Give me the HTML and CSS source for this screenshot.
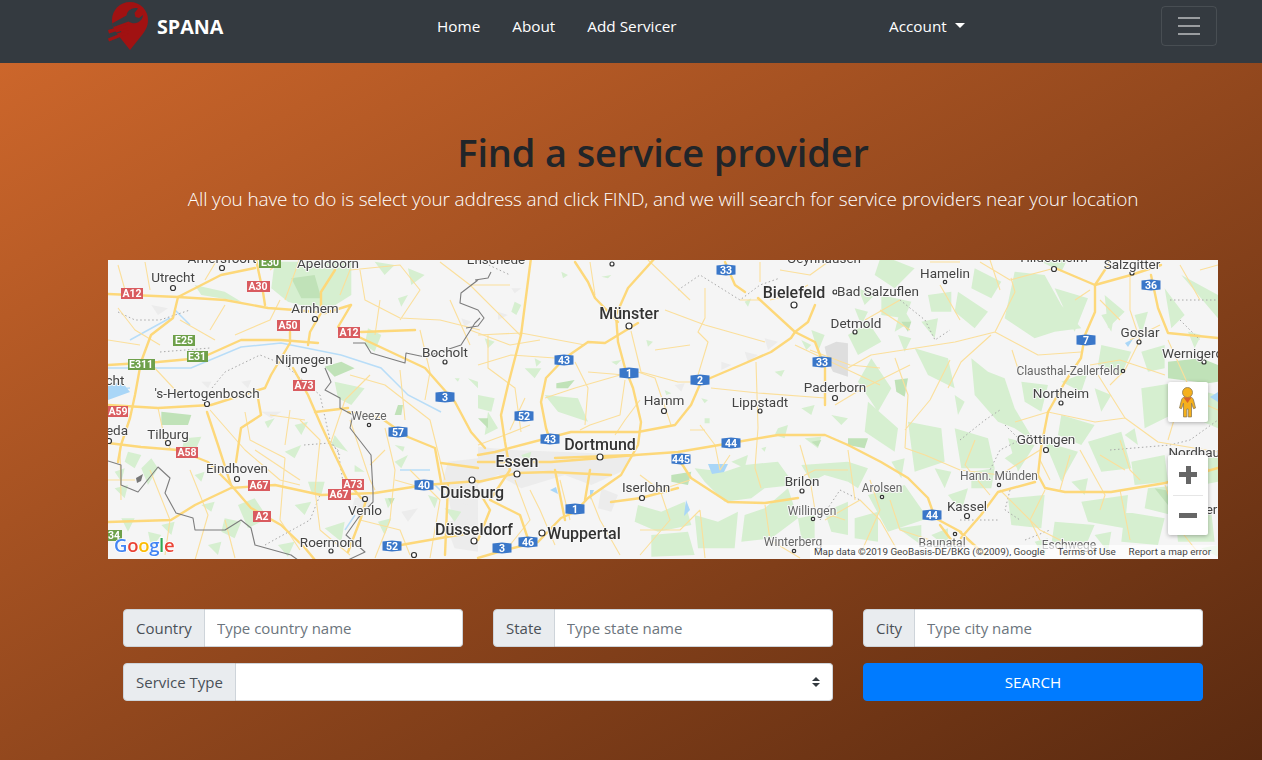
FILE: index.html
```html
<!DOCTYPE html>
<html lang="en">
<head>
<meta charset="utf-8">
<title>SPANA</title>
<link rel="stylesheet" href="styles.css">
</head>
<body>
<nav class="navbar">
  <a class="brand" href="#">
    <svg class="brand-logo" viewBox="0 0 44 52" aria-hidden="true">
      <path class="pin" d="M23 2C13 2 5 10 5 20c0 6 2.500 10.500 6 15l12 15 12-15c3.500-4.500 6-9 6-15C41 10 33 2 23 2Z"/>
      <path class="pin" d="M1 30L20 24.500 21 27.500 2 33.500ZM1 38.500L21 30.500 22 33.500 2 41.500Z"/>
      <path class="wrench" d="M31 8.500C26 7 20.500 10 19.500 15.500L5 23.500 6.500 27 21.500 21.500C26 24.500 31.500 23.500 34.500 19.500C35.500 18 36 16.500 36 15L32 18 28.500 17 27.500 13Z"/>
      <path class="wrench" d="M0 35.500L14 31 14.300 32 0 37Z"/>
    </svg>
    <span>SPANA</span>
  </a>
  <ul class="nav-links">
    <li><a href="#">Home</a></li>
    <li><a href="#">About</a></li>
    <li><a href="#">Add Servicer</a></li>
  </ul>
  <a class="account" href="#">Account<i class="caret"></i></a>
  <button class="toggler" type="button" aria-label="Menu">
    <svg viewBox="0 0 30 30" aria-hidden="true"><path d="M4 7h22M4 15h22M4 23h22"/></svg>
  </button>
</nav>

<main class="page">
  <header class="hero">
    <h1>Find a service provider</h1>
    <p>All you have to do is select your address and click FIND, and we will search for service providers near your location</p>
  </header>

  <section class="map">
    <svg class="map-canvas" viewBox="108 260 1110 299" aria-label="Map">
      <rect x="108" y="260" width="1110" height="299" class="land"/>

      <!-- urban and grey areas -->
      <g transform="translate(478 255) scale(.3333)">
        <path class="urban" d="M0 575L100 585 240 590 470 600 430 650 340 690 260 660 130 700 60 660 0 690ZM370 700L420 720 400 770 360 760ZM-90 720L0 730 0 860-60 880Z"/>
        <path class="grey" d="M1040 275L1075 260 1110 265 1110 365 1065 350 1050 320Z"/>
        <path class="urban" d="M60 170L90 180 60 195ZM100 100L130 100 110 115ZM590 390L620 385 610 410ZM730 320L760 330 730 345ZM800 290L840 300 810 320ZM860 250L900 260 870 285Z"/>
      </g>
      <g transform="translate(108 255) scale(.3333)">
        <path class="urban" d="M130 150L180 160 150 180ZM280 380L310 380 300 400ZM400 380L430 375 420 400ZM1020 620L1110 610 1110 760 1050 740 1000 690ZM1010 800L1110 790 1110 890 1040 880ZM880 770L930 760 900 800ZM460 470L520 470 490 490ZM740 730L790 720 780 770 730 770ZM1060 190L1090 200 1070 215Z"/>
      </g>

      <!-- green areas: west -->
      <g transform="translate(108 255) scale(.3333)">
        <path class="gr" d="M500 20L730 20 730 120 650 170 540 140 490 100ZM260 90L350 110 400 140 280 120ZM800 20L860 30 830 60ZM900 40L950 60 910 90ZM60 590L100 600 80 640 50 620ZM230 550L280 545 260 590 220 590ZM100 640L130 610 150 640 120 690ZM260 660L290 650 280 680ZM680 380L770 400 730 450 690 430ZM390 750L440 730 480 790 420 820ZM560 510L600 500 580 540ZM530 590L580 570 560 610ZM600 680L650 680 640 720 610 710ZM740 630L770 650 740 650ZM830 730L860 730 840 760ZM860 570L890 575 885 590ZM1040 370L1055 370 1050 380ZM280 750L320 740 310 770ZM40 790L80 790 60 830ZM350 790L400 800 380 850 340 830ZM560 750L610 740 590 780ZM860 620L900 600 880 640ZM680 540L720 590 670 570ZM780 220L820 240 800 290 770 270ZM870 130L900 120 880 155ZM20 650L50 640 40 680ZM470 500L500 490 480 520ZM650 820L710 800 700 860ZM510 870L560 860 540 905ZM810 800L850 790 830 840ZM960 720L990 730 980 760ZM300 870L340 860 330 900ZM160 810L200 800 190 840ZM120 830L160 840 130 880ZM1010 760L1060 770 1040 800ZM1080 370L1110 380 1110 400ZM20 700L60 690 50 730Z"/>
        <path class="gd" d="M550 70L620 60 640 130 580 130ZM160 470L250 480 240 510 160 510ZM650 335L700 320 740 340 680 365ZM870 450L885 450 880 480 860 480ZM840 730L860 730 850 750Z"/>
      </g>
      <!-- green areas: centre -->
      <g transform="translate(478 255) scale(.3333)">
        <path class="gr" d="M0 420L50 430 40 470 0 460ZM200 420L300 430 330 500 240 470ZM30 470L60 520 20 540ZM650 640L740 650 800 630 900 620 950 690 860 700 820 730 740 740 680 680ZM480 750L550 770 620 740 640 810 540 830 470 800ZM800 780L860 760 930 700 960 790 880 850 790 860ZM520 840L630 830 650 900 520 905ZM650 780L720 800 780 770 770 880 660 880ZM970 630L1110 620 1110 680 1040 660 1000 680ZM980 550L1030 545 1020 580ZM970 255L1000 270 985 285ZM110 140L130 150 115 180 100 170ZM505 255L525 260 510 275ZM170 310L190 320 175 335ZM670 430L690 435 680 445ZM560 405L580 415 565 420ZM890 350L920 345 910 365ZM1000 225L1040 240 1020 290ZM400 320L430 315 415 330ZM800 140L820 130 810 155ZM680 490L695 490 695 505 680 505ZM850 580L865 575 860 590ZM250 50L270 60 255 70ZM370 65L400 60 390 70ZM760 620L810 600 800 640ZM900 520L930 510 920 550 890 540ZM970 460L1010 450 1000 480ZM1060 480L1110 490 1090 510ZM140 340L190 340 170 370ZM130 600L160 590 150 630ZM20 250L50 260 30 280ZM960 790L1010 780 1010 860 970 850ZM1040 770L1110 740 1110 840 1060 830Z"/>
        <path class="gd" d="M235 385L290 375 270 400 235 400ZM580 660L640 650 630 690 580 680ZM0 490L30 490 30 520ZM1000 560L1030 555 1020 575Z"/>
      </g>
      <!-- green areas: east -->
      <g transform="translate(848 255) scale(.3333)">
        <path class="gr" d="M370 310L420 350 470 370 500 460 560 560 500 520 450 500 380 420ZM500 50L590 60 640 150 700 220 620 230 560 250 470 190ZM330 110L420 170 380 220 320 170ZM70 310L130 400 90 470 30 380ZM60 440L150 520 140 590 50 530ZM200 280L300 310 320 400 240 360ZM180 500L280 520 290 620 200 650ZM320 520L420 550 440 640 340 640ZM620 100L720 130 680 230ZM770 120L830 170 780 220ZM950 100L1010 180 970 220ZM1000 60L1110 120 1110 190ZM590 560L690 590 640 680ZM720 560L820 530 850 640 760 650ZM880 400L1000 380 990 470 890 520ZM850 620L950 600 960 680 860 690ZM900 700L1000 690 1010 790 890 760ZM700 740L840 720 830 820 720 800ZM480 730L590 720 580 820 490 810ZM60 720L170 690 240 790 120 830ZM370 650L440 640 430 700 370 700ZM620 800L740 810 710 880 610 870ZM830 770L950 790 930 870 820 860ZM980 750L1090 770 1100 860 990 860ZM100 0L200 40 140 100 80 60ZM0 240L60 200 100 260 30 300ZM520 380L600 390 580 470 530 440ZM760 270L850 290 820 360 750 330ZM380 40L460 80 430 130 370 100ZM100 120L190 140 170 190 100 180ZM640 480L740 510 700 570 630 540ZM480 550L560 570 510 650ZM0 620L60 640 30 700 0 680ZM240 120L310 110 310 170 250 170ZM220 200L270 190 260 250ZM160 150L190 200 140 230ZM30 100L80 120 50 150ZM880 290L950 270 950 340 900 350ZM1030 400L1110 420 1110 520 1040 490ZM1040 620L1110 600 1110 680 1060 690ZM300 720L360 700 340 770ZM20 790L90 770 90 860 20 850ZM150 820L220 810 220 870ZM640 380L720 350 700 410ZM580 20L660 10 640 50Z"/>
        <path class="gr" d="M740 400L790 420 760 470ZM830 540L860 520 870 570ZM470 610L500 590 510 640ZM130 620L170 610 160 670ZM260 640L310 650 290 700ZM20 160L60 170 40 210ZM150 240L190 250 170 290ZM320 420L350 440 330 480ZM760 180L800 170 790 230ZM860 180L900 170 880 240ZM1020 230L1060 240 1040 280ZM670 680L720 670 710 720ZM560 860L600 850 590 905ZM740 840L790 830 780 890ZM250 840L300 820 300 880ZM1060 880L1110 870 1110 905Z"/>
        <path class="gd" d="M960 320L1060 310 1110 330 1110 380 1080 385 960 370ZM0 550L60 550 50 580 0 570ZM140 375L180 370 170 425 145 410ZM160 200L190 200 180 230ZM920 700L980 710 960 750Z"/>
      </g>

      <!-- water -->
      <g class="water">
        <path d="M108 368L191 368 241 347 281 343 341 355 381 368 408 395 441 412"/>
        <path d="M108 390L130 388M130 340L170 318M175 310L190 325"/>
        <path d="M400 470L430 470M355 515L345 530M430 480L445 495"/>
      </g>
      <path class="lake" d="M108 385L122 382 130 392 108 400ZM708 464L728 464 724 472 712 474ZM686 500L690 510 684 516ZM1125 343L1133 339 1128 347ZM1210 397L1218 392 1218 402ZM550 490L556 487 558 494ZM590 490L594 490 590 500Z"/>

      <!-- admin dashed borders -->
      <g class="admin">
        <path d="M118 312L135 320 160 320 190 310M160 352L210 348M212 388L225 372 260 355 285 365 320 395 330 440 340 455M304 445L330 443 338 450 345 495M265 545L310 520 320 495"/>
        <path d="M678 290L700 275 740 300 760 285 780 278M478 260L510 275M900 300L925 320 935 340 950 330M960 440L985 420 1000 410M1005 425L1020 440 1000 450 990 470M1010 490L1005 510 1020 520M1170 300L1190 300 1218 300M1180 320L1200 340M1110 450L1170 445 1190 440 1218 420M1025 540L1050 530M1170 530L1175 510M960 520L1000 520M820 520L840 490 860 500"/>
      </g>

      <!-- minor roads -->
      <g class="mn">
        <path d="M118 308L135 330 160 345M108 340L140 345M150 363L180 395M158 408L165 440 170 448M120 447L121 500M108 480L135 480M210 410L245 450 280 480 300 485M245 412L250 440 285 458M270 415L305 420M285 458L280 520M300 420L320 440 315 490 320 530M280 520L300 550M320 530L350 555M190 470L208 515 195 560M150 470L170 520 165 555M225 520L235 558M255 450L300 480M350 420L370 480 375 490M385 428L395 470 390 520 375 558M395 480L430 490M410 470L440 500 430 558M360 520L400 530 410 555M340 295L350 270 400 265 420 290 400 320M360 270L365 300 400 318 440 320 480 330M380 300L375 335M420 330L430 372 425 400M450 300L470 345M470 330L510 345 540 340M270 270L280 262M440 262L470 285 520 335M470 285L510 285M280 300L270 320 235 335M180 320L215 340M225 305L210 330M205 280L220 255M125 290L118 265M145 262L150 290M300 258L285 300M350 375L385 385 430 420 445 480M400 370L405 420M370 375L345 400 330 445M385 450L370 465M290 410L285 445"/>
        <path d="M478 335L521 333 585 345M488 335L488 368 515 388 521 432M478 365L511 355 555 358M575 362L588 388 585 425M588 372L625 375M631 331L641 372 678 382 701 382M638 372L655 378 671 425M665 310L705 325 765 342M705 288L705 318 698 332 708 342 698 375M711 388L758 393 825 398M756 362L758 428 755 468 761 488M545 398L575 388 620 375M625 380L620 415 590 425 580 430M510 430L525 398M640 400L625 420 615 435M478 445L505 435 530 425M700 425L715 445 720 470 730 455M660 490L670 520 640 555M640 475L660 490 690 480M590 495L600 520 620 555M560 480L570 520M530 490L540 510 555 545M515 480L530 520 510 545M795 480L815 470 848 470M810 350L850 365 880 368M770 300L790 295 808 285M835 405L860 390 910 365M795 345L880 385M800 445L810 480 815 510 845 520M765 505L770 540 800 558M700 510L705 558M640 530L680 530 700 510M825 520L860 500 880 520 900 555M848 450L855 500M760 262L760 282M648 260L690 300M740 300L760 300M590 262L595 295M655 350L690 345M690 430L705 430M900 300L865 320M780 270L810 275 828 262"/>
        <path d="M848 368L871 355 955 342 995 332 1038 355 1081 352M991 335L961 362 948 388M895 358L908 395 905 448M1011 278L1015 292 995 332M1098 375L1125 418 1158 442 1218 452M1015 422L1048 412 1095 422 1125 418M1055 268L1010 280 980 262M940 285L960 320M1130 275L1130 310 1140 340 1125 370 1110 385M1160 325L1130 340M1100 300L1120 320M1168 340L1195 400 1218 410M1080 450L1105 495 1100 510M1100 455L1125 470M1040 450L1000 475 960 470 925 455M1070 455L1060 490M905 448L925 455M975 440L965 465 990 495M1000 490L1040 530 1090 555M1045 490L1030 520 1040 540M1120 490L1130 540M890 500L900 530 930 540M870 480L880 510 860 555M1165 485L1180 530 1200 555M1120 440L1130 470 1140 480M1040 460L1050 480M1190 460L1210 470M1180 400L1168 440M950 360L930 400 905 430M1090 365L1120 360 1165 375M1200 270L1218 265M1180 265L1200 300M930 262L960 262M880 310L910 330M1012 350L1020 375M990 260L1000 290M1075 300L1090 290"/>
      </g>

      <!-- major roads -->
      <g class="rd">
        <path d="M108 294L178 297 225 300 268 308 295 310 325 313 351 305"/>
        <path d="M178 297L173 318 151 335 141 362 135 395 130 418 121 445 118 462"/>
        <path d="M108 365L158 362 201 358 241 340 281 340 318 343"/>
        <path d="M335 270L321 292 321 313 310 332 308 345"/>
        <path d="M290 332L290 343 271 375 265 388 211 405 158 408 108 405"/>
        <path d="M293 368L308 395 321 425 335 455 348 482 361 498"/>
        <path d="M108 522L171 520 195 505 231 488 275 485 321 495 375 493 425 485 478 481"/>
        <path d="M108 443L141 447 178 450 208 462 231 485 251 508 281 525 305 548 315 560"/>
        <path d="M207 412L218 445 231 485"/>
        <path d="M258 398L261 415 241 428 236 462"/>
        <path d="M361 332L415 330"/>
        <path d="M351 305L338 327 361 338 425 368 455 402 471 432 485 448"/>
        <path d="M348 412L381 418 408 437 435 448 441 482"/>
        <path d="M315 412L348 408"/>
        <path d="M255 255L263 292 265 305"/>
        <path d="M255 268L221 275 178 297"/>
        <path d="M441 463L478 468"/>
        <path d="M448 485L445 555"/>
        <path d="M401 545L475 532"/>
        <path d="M348 552L361 518 366 500"/>
        <path d="M655 258L628 288 616 315 618 342 625 368 633 388 641 422 638 445 621 475 588 498 575 512 561 518 538 542 505 550 478 558"/>
        <path d="M638 323L605 343 588 342 565 358 546 378 541 402 546 428 550 440"/>
        <path d="M795 332L791 338 771 352 741 365 701 382 691 405 675 425 638 432 571 432 548 438 495 452 478 455"/>
        <path d="M825 405L825 368 815 342 795 332 758 298"/>
        <path d="M815 305L808 322 795 332"/>
        <path d="M555 458L635 455 678 452 731 443 778 435 825 435 848 445"/>
        <path d="M678 458L691 478 728 502 765 503 798 498"/>
        <path d="M531 258L521 335 508 385 501 415 505 442 510 470"/>
        <path d="M725 262L735 285 745 292"/>
        <path d="M611 502L641 498 678 488"/>
        <path d="M478 462L551 462 601 458 635 455"/>
        <path d="M478 482L518 473 551 472 611 475"/>
        <path d="M575 262L588 282 595 298 618 322"/>
        <path d="M478 540L490 510 478 490M510 470L490 500 520 515 530 545M590 470L585 500M555 470L565 520"/>
        <path d="M1095 285L1095 312 1085 335 1081 358 1065 382 1048 412 1041 448 1038 475 1045 488 1065 492 1111 492 1165 483 1218 468"/>
        <path d="M848 445L881 462 908 478 928 498 935 518 961 532"/>
        <path d="M961 538L981 515 998 492 1035 482"/>
        <path d="M1151 275L1158 308 1168 333 1218 338"/>
        <path d="M1055 268L1095 285 1131 275 1161 265"/>
        <path d="M1095 285L1110 262"/>
        <path d="M940 525L955 545M985 555L960 532"/>
      </g>

      <!-- national borders -->
      <g class="border">
        <path d="M353 343L365 343 371 353 405 363 406 353 425 357 461 345 475 323 480 318M478 280L461 293 460 303 478 310 484 318 478 326 466 328M491 272L488 278 475 280"/>
        <path d="M325 368L331 382 325 390 340 398 340 408 353 415 350 428 371 455 373 492 373 502 358 518 346 535 365 552 348 560"/>
        <path d="M108 461L121 465 121 485 138 492 158 467 170 478 165 493 176 513 193 518 195 530 225 530 241 520 251 528 255 545 291 555 298 560"/>
      </g>
      <path class="lakeg" d="M136 478L143 474 141 481 137 483Z"/>

      <!-- place dots -->
      <g class="dot">
        <circle cx="222" cy="268" r="2.500"/><circle cx="173" cy="288" r="2.500"/><circle cx="315" cy="319" r="2.500"/><circle cx="304" cy="370" r="2.500"/><circle cx="207" cy="404" r="2.500"/><circle cx="168" cy="443" r="2.500"/><circle cx="237" cy="479" r="2.500"/><circle cx="365" cy="499" r="2.500"/><circle cx="331" cy="551" r="2"/><circle cx="369" cy="425" r="1.700"/><circle cx="445" cy="362" r="2"/><circle cx="414" cy="555" r="2.500"/><circle cx="109" cy="441" r="2.500"/>
        <circle cx="472" cy="480" r="3"/><circle cx="474" cy="541" r="3"/><circle cx="517" cy="474" r="3"/><circle cx="600" cy="457" r="3"/><circle cx="629" cy="326" r="3"/><circle cx="664" cy="411" r="2.500"/><circle cx="642" cy="498" r="2.500"/><circle cx="542" cy="533" r="3"/><circle cx="794" cy="305" r="3"/><circle cx="835" cy="292" r="2"/><circle cx="855" cy="332" r="2"/><circle cx="760" cy="411" r="2"/><circle cx="835" cy="398" r="2.500"/><circle cx="802" cy="491" r="2"/><circle cx="813" cy="519" r="1.700"/><circle cx="794" cy="551" r="1.700"/><circle cx="882" cy="497" r="1.700"/><circle cx="967" cy="516" r="2.500"/><circle cx="955" cy="534" r="1.700"/><circle cx="999" cy="485" r="1.700"/><circle cx="1046" cy="450" r="2.500"/><circle cx="1061" cy="403" r="2"/><circle cx="1123" cy="371" r="1.700"/><circle cx="1139" cy="342" r="2"/><circle cx="1204" cy="362" r="2"/><circle cx="1132" cy="273" r="2"/><circle cx="1054" cy="269" r="2.500"/><circle cx="945" cy="282" r="1.700"/><circle cx="612" cy="264" r="2"/>
      </g>

      <!-- place labels -->
      <g class="lb">
        <text x="222" y="263">Amersfoort</text><text x="173" y="282">Utrecht</text><text x="328" y="268">Apeldoorn</text><text x="315" y="313">Arnhem</text><text x="304" y="364">Nijmegen</text><text x="207" y="398">'s-Hertogenbosch</text><text x="168" y="439">Tilburg</text><text x="237" y="473">Eindhoven</text><text x="365" y="515">Venlo</text><text x="331" y="547">Roermond</text><text x="445" y="357">Bocholt</text><text x="115" y="385">cht</text><text x="117" y="435">eda</text>
        <text x="664" y="405">Hamm</text><text x="646" y="492">Iserlohn</text><text x="760" y="407">Lippstadt</text><text x="835" y="392">Paderborn</text><text x="802" y="486">Brilon</text><text x="856" y="328">Detmold</text><text x="878" y="296">Bad Salzuflen</text><text x="945" y="278">Hamelin</text><text x="1054" y="262">Hildesheim</text><text x="1132" y="269">Salzgitter</text><text x="1140" y="337">Goslar</text><text x="1200" y="358">Wernigerode</text><text x="1061" y="398">Northeim</text><text x="1046" y="444">Göttingen</text><text x="967" y="511">Kassel</text><text x="824" y="263">Oeynhausen</text><text x="496" y="264">Enschede</text><text x="1205" y="457">Nordhausen</text><text x="1215" y="514">ers</text>
      </g>
      <g class="lb lb-s">
        <text x="369" y="420">Weeze</text><text x="812" y="515">Willingen</text><text x="793" y="546">Winterberg</text><text x="882" y="492">Arolsen</text><text x="942" y="547">Baunatal</text><text x="1069" y="549">Eschwege</text><text x="999" y="480">Hann. Münden</text><text x="1068" y="375">Clausthal-Zellerfeld</text>
      </g>
      <g class="lb lb-l">
        <text x="472" y="498">Duisburg</text><text x="474" y="535">Düsseldorf</text><text x="517" y="467">Essen</text><text x="600" y="450">Dortmund</text><text x="629" y="319">Münster</text><text x="584" y="539">Wuppertal</text><text x="794" y="298">Bielefeld</text>
      </g>

      <!-- red motorway shields -->
      <g class="sh-r">
        <rect x="121" y="288" width="22" height="11"/><rect x="247" y="281" width="23" height="11"/><rect x="277" y="320" width="23" height="11"/><rect x="338" y="327" width="22" height="11"/><rect x="293" y="380" width="22" height="11"/><rect x="108" y="406" width="20" height="11"/><rect x="176" y="447" width="22" height="11"/><rect x="248" y="480" width="22" height="11"/><rect x="342" y="479" width="22" height="11"/><rect x="328" y="489" width="23" height="11"/><rect x="253" y="511" width="18" height="11"/>
      </g>
      <g class="sh-g">
        <rect x="173" y="335" width="22" height="11"/><rect x="187" y="351" width="21" height="11"/><rect x="128" y="359" width="27" height="11"/><rect x="259" y="257" width="22" height="11"/><rect x="108" y="530" width="14" height="11"/>
      </g>
      <g class="sh-t">
        <text x="132" y="297">A12</text><text x="258" y="290">A30</text><text x="288" y="329">A50</text><text x="349" y="336">A12</text><text x="304" y="389">A73</text><text x="118" y="415">A59</text><text x="187" y="456">A58</text><text x="259" y="489">A67</text><text x="353" y="488">A73</text><text x="339" y="498">A67</text><text x="262" y="520">A2</text><text x="184" y="344">E25</text><text x="197" y="360">E31</text><text x="141" y="368">E311</text><text x="270" y="266">E30</text><text x="114" y="539">34</text>
      </g>

      <!-- blue motorway shields -->
      <defs><path id="hex" d="M-9.500-4.500L0-5.500 9.500-4.500 9.500 4.500 0 5.500-9.500 4.500Z"/></defs>
      <g class="sh-b">
        <use href="#hex" x="445" y="397"/><use href="#hex" x="398" y="432"/><use href="#hex" x="424" y="485"/><use href="#hex" x="392" y="546"/><use href="#hex" x="564" y="360"/><use href="#hex" x="629" y="373"/><use href="#hex" x="700" y="380"/><use href="#hex" x="726" y="270"/><use href="#hex" x="822" y="362"/><use href="#hex" x="524" y="416"/><use href="#hex" x="550" y="439"/><use href="#hex" x="731" y="443"/><use href="#hex" x="681" y="459"/><use href="#hex" x="575" y="509"/><use href="#hex" x="528" y="542"/><use href="#hex" x="502" y="548"/><use href="#hex" x="1151" y="285"/><use href="#hex" x="1086" y="340"/><use href="#hex" x="932" y="515"/>
      </g>
      <g class="sh-t">
        <text x="445" y="401">3</text><text x="398" y="436">57</text><text x="424" y="489">40</text><text x="392" y="550">52</text><text x="564" y="364">43</text><text x="629" y="377">1</text><text x="700" y="384">2</text><text x="726" y="274">33</text><text x="822" y="366">33</text><text x="524" y="420">52</text><text x="550" y="443">43</text><text x="731" y="447">44</text><text x="681" y="463">445</text><text x="575" y="513">1</text><text x="528" y="546">46</text><text x="502" y="552">3</text><text x="1151" y="289">36</text><text x="1086" y="344">7</text><text x="932" y="519">44</text>
      </g>

      <text class="google" x="114" y="552"><tspan class="g-b">G</tspan><tspan class="g-r">o</tspan><tspan class="g-y">o</tspan><tspan class="g-b">g</tspan><tspan class="g-g">l</tspan><tspan class="g-r">e</tspan></text>
    </svg>

    <div class="attribution">
      <span>Map data ©2019 GeoBasis-DE/BKG (©2009), Google</span>
      <span>Terms of Use</span>
      <span>Report a map error</span>
    </div>

    <div class="pegman">
      <svg viewBox="0 0 40 40" aria-hidden="true">
        <path class="peg-body" d="M19.500 14.500c-3 0-5.500 1-6 3.500L11.500 26l2 .7 2-5.500v13.700h3.300V27h1.400v7.900h3.300V21.200l2 5.500 2-.7-2-8c-.5-2.500-3-3.500-6-3.500Z"/>
        <circle class="peg-body" cx="19.500" cy="10.500" r="5"/>
        <path class="peg-scarf" d="M15.500 15.500L19.500 21 23.500 15.500Z"/>
      </svg>
    </div>
    <div class="zoom-box">
      <div class="zoom-btn"><i class="plus"></i></div>
      <div class="zoom-sep"></div>
      <div class="zoom-btn"><i class="minus"></i></div>
    </div>
  </section>

  <form class="search-form">
    <label class="field"><span class="addon">Country</span><input type="text" placeholder="Type country name"></label>
    <label class="field"><span class="addon">State</span><input type="text" placeholder="Type state name"></label>
    <label class="field"><span class="addon">City</span><input type="text" placeholder="Type city name"></label>
    <label class="field field-wide"><span class="addon">Service Type</span>
      <span class="select-wrap"><select><option></option></select>
        <svg class="select-arrows" viewBox="0 0 8 10" aria-hidden="true"><path d="M4 0L8 4H0ZM4 10L0 6H8Z"/></svg>
      </span>
    </label>
    <button class="search-btn" type="button">SEARCH</button>
  </form>
</main>
</body>
</html>
```
FILE: styles.css
```css
* { box-sizing: border-box; }
html, body { margin: 0; height: 100%; }
body {
  font-family: "Open Sans", "Noto Sans", sans-serif;
  font-size: 16px;
  color: #212529;
  overflow: hidden;
  display: flex;
  flex-direction: column;
}
a { color: inherit; text-decoration: none; }

.navbar {
  flex: none;
  height: 63px;
  background: #343a40;
  color: #fff;
  display: flex;
  align-items: center;
  padding: 0 45px 12px 107px;
  font-size: 15.300px;
}
.brand { display: flex; align-items: center; gap: 6px; font-weight: 700; font-size: 19.700px; width: 330px; }
.brand span { margin-top: 1px; }
.brand-logo { width: 44px; height: 52px; margin-top: 1px; }
.pin { fill: #a11212; }
.wrench { fill: #343a40; }
.nav-links { list-style: none; margin: 0; padding: 0; display: flex; gap: 32px; width: 452px; }
.account { display: flex; align-items: center; width: 272px; }
.caret { display: inline-block; margin-left: 8px; border-top: 5px solid #fff; border-left: 5px solid transparent; border-right: 5px solid transparent; }
.toggler {
  width: 56px; height: 40px; padding: 0;
  margin-top: 1px;
  background: transparent;
  border: 1px solid rgba(255,255,255,.1);
  border-radius: 4px;
  display: flex; align-items: center; justify-content: center;
}
.toggler svg { width: 30px; height: 30px; }
.toggler path { stroke: rgba(255,255,255,.5); stroke-width: 2; fill: none; }

.page {
  flex: 1;
  min-height: 0;
  padding: 65px 44px 0 108px;
  background: linear-gradient(to bottom right, #cc662b, #5a2a10);
}
.hero { text-align: center; }
.hero h1 { margin: 0; font-size: 38px; line-height: 48px; font-weight: 600; letter-spacing: -.15px; color: #212529; }
.hero p { margin: 8px 0 0; font-size: 19px; line-height: 30px; font-weight: 300; letter-spacing: -.15px; color: #fff; }

.map { position: relative; height: 299px; margin-top: 46px; overflow: hidden; background: #f5f5f5; }
.map-canvas { display: block; width: 1110px; height: 299px; font-family: Roboto, sans-serif; filter: blur(.35px); }
.land { fill: #f5f5f5; }
.urban { fill: #ececec; }
.grey { fill: #dedede; }
.gr { fill: #d6efd0; }
.gd { fill: #c0e2b8; }
.water path { fill: none; stroke: #b8ddf8; stroke-width: 1.500; }
.lake { fill: #a9d6f7; }
.lakeg { fill: #777; }
.admin path { fill: none; stroke: #a8a8a8; stroke-width: 1; stroke-dasharray: 1.500 2.500; }
.mn path { fill: none; stroke: #fbdf9b; stroke-width: 1.100; stroke-linejoin: round; }
.rd path { fill: none; stroke: #fdd87a; stroke-width: 2.400; stroke-linejoin: round; stroke-linecap: round; }
.border path { fill: none; stroke: #7d7d7d; stroke-width: 1.100; stroke-linejoin: round; }
.dot circle { fill: #fff; stroke: #333; stroke-width: 1.200; }
.lb text { font-size: 13.500px; fill: #444; text-anchor: middle; stroke: #f8f8f8; stroke-width: 2px; paint-order: stroke; stroke-linejoin: round; }
.lb-s text { font-size: 12px; fill: #666; }
.lb-l text { font-size: 16px; font-weight: 500; fill: #333; }
.sh-r rect { fill: #d95b5f; }
.sh-g rect { fill: #6ea04a; }
.sh-b use { fill: #3a77c9; }
.sh-t text { font-size: 10.500px; font-weight: 700; fill: #fff; text-anchor: middle; }
.google { font-family: "Open Sans", sans-serif; font-size: 18.500px; font-weight: 600; stroke: #fff; stroke-width: 1.500px; paint-order: stroke; letter-spacing: -.3px; }
.g-b { fill: #4285f4; } .g-r { fill: #ea4335; } .g-y { fill: #fbbc05; } .g-g { fill: #34a853; }

.attribution {
  position: absolute; right: 0; bottom: 0; height: 14px; width: 408px;
  padding: 0 7px 0 4px;
  display: flex; justify-content: space-between; align-items: center;
  background: rgba(255,255,255,.65);
  font: 9.900px/14px Roboto, sans-serif;
  color: #444;
}
.pegman, .zoom-box {
  position: absolute; right: 10px; width: 40px;
  background: #fff; border-radius: 2px;
  box-shadow: 0 1px 4px rgba(0,0,0,.3);
}
.pegman { top: 122px; height: 40px; }
.pegman svg { display: block; width: 40px; height: 40px; }
.peg-body { fill: #f5b01c; stroke: #8b7a55; stroke-width: .8; }
.peg-scarf { fill: #d9622b; }
.zoom-box { top: 195px; height: 80px; }
.zoom-btn { height: 39.500px; display: flex; align-items: center; justify-content: center; }
.zoom-sep { height: 1px; margin: 0 5px; background: #e6e6e6; }
.plus, .minus { display: block; width: 18px; height: 5px; background: #666; position: relative; }
.plus::after { content: ""; position: absolute; left: 6.500px; top: -6.500px; width: 5px; height: 18px; background: #666; }

.search-form {
  display: grid;
  grid-template-columns: repeat(3, 340px);
  gap: 16px 30px;
  margin: 50px 15px 0;
}
.field { display: flex; height: 38px; font-size: 15px; }
.field-wide { grid-column: span 2; }
.addon {
  display: flex; align-items: center;
  padding: 0 12px;
  color: #495057;
  background: #e9ecef;
  border: 1px solid #ced4da;
  border-radius: 4px 0 0 4px;
}
.field input, .select-wrap {
  flex: 1; min-width: 0;
  border: 1px solid #ced4da;
  border-left: 0;
  border-radius: 0 4px 4px 0;
  background: #fff;
}
.field input {
  padding: 0 12px;
  font: inherit;
  color: #495057;
  outline: 0;
}
.field input::placeholder { color: #6c757d; opacity: 1; }
.select-wrap { position: relative; display: block; }
.select-wrap select { display: block; width: 100%; height: 100%; border: 0; background: transparent; appearance: none; outline: 0; font: inherit; }
.select-arrows { position: absolute; right: 12px; top: 13px; width: 8px; height: 10px; fill: #343a40; }
.search-btn {
  height: 38px; border: 1px solid #007bff; border-radius: 4px;
  background: #007bff; color: #fff;
  font: inherit; font-size: 15.200px;
}
```
